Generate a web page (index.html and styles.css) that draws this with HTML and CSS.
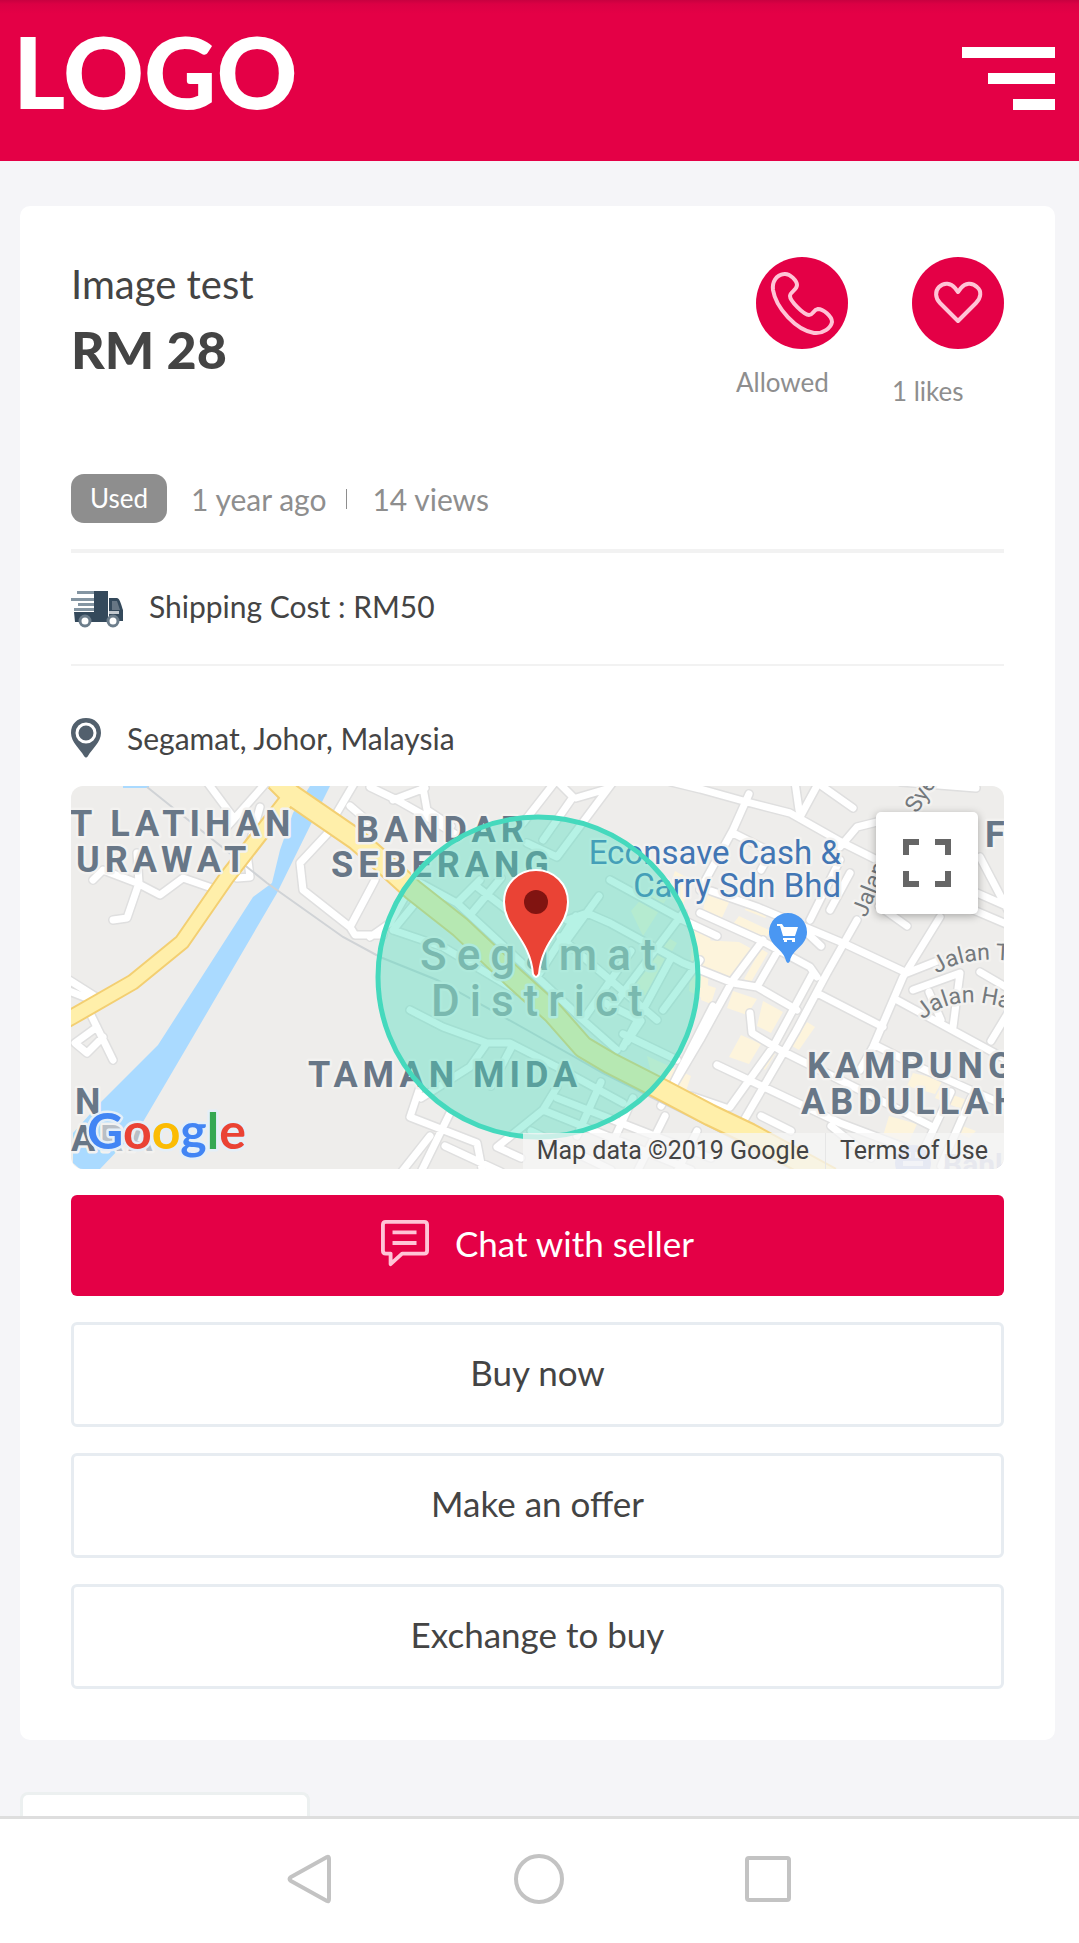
FILE: index.html
```html
<!DOCTYPE html>
<html lang="en">
<head>
  <meta charset="UTF-8">
  <meta name="viewport" content="width=device-width, initial-scale=1.0">
  <title>Image test</title>
  <link rel="stylesheet" href="styles.css">
</head>
<body>

  <header class="header">
    <a class="logo" href="#">LOGO</a>
    <button class="menu-button" type="button" aria-label="Menu">
      <span class="bar"></span>
      <span class="bar bar-medium"></span>
      <span class="bar bar-short"></span>
    </button>
  </header>

  <main class="main">
    <section class="card">
      <div class="card-head">
        <div class="product">
          <h1>Image test</h1>
          <p class="price">RM 28</p>
        </div>
        <div class="actions">
          <div class="action">
            <button class="round" type="button" aria-label="Call seller">
              <svg width="92" height="92" viewBox="0 0 92 92">
                <path d="M28 17C20 18 16 25 17 33C20 51 40 73 58 76C67 77 75 71 76 65C76 59 67 52 62 52C57 53 57 58 53 58C48 58 34 44 34 39C34 35 41 33 41 28C41 24 34 16 28 17Z"/>
              </svg>
            </button>
            <span class="action-label">Allowed</span>
          </div>
          <div class="action likes">
            <button class="round" type="button" aria-label="Like">
              <svg width="92" height="92" viewBox="0 0 92 92">
                <path d="M46 64L28 46C23 41 23 34 27 30C32 25 39 26 43 31L46 35L49 31C53 26 60 25 65 30C70 34 69 41 64 46Z"/>
              </svg>
            </button>
            <span class="action-label">1 likes</span>
          </div>
        </div>
      </div>

      <div class="meta">
        <span class="badge">Used</span>
        <span class="age">1 year ago</span>
        <span class="divider"></span>
        <span>14 views</span>
      </div>

      <div class="shipping">
        <svg width="52" height="38" viewBox="0 0 52 38">
          <path fill="#8495a2" d="M6 1H24V4H6ZM0 8H24V11H0ZM7 13H24V16H7ZM3 18H24V21H3Z"/>
          <path fill="#34495b" d="M23 1H37V32H4L3 22H23Z"/>
          <path fill="#34495b" d="M38 8H46C49 8 51 18 52 20V31H38Z"/>
          <path fill="#fff" d="M41 11H46L49 20H41Z" opacity=".25"/>
          <path fill="#fff" d="M38 21H48V24H38Z" opacity=".7"/>
          <circle cx="14" cy="31" r="5" fill="#fff" stroke="#6c7d8b" stroke-width="3"/>
          <circle cx="42" cy="31" r="5" fill="#fff" stroke="#6c7d8b" stroke-width="3"/>
        </svg>
        <span>Shipping Cost : RM50</span>
      </div>

      <div class="location">
        <svg width="30" height="40" viewBox="0 0 30 40">
          <path fill="#52606d" d="M15 0C6 0 0 6 0 15C0 24 9 31 13 38Q15 41 17 38C21 31 30 24 30 15C30 6 24 0 15 0Z"/>
          <circle cx="15" cy="15" r="9" fill="#52606d" stroke="#fff" stroke-width="3"/>
        </svg>
        <span>Segamat, Johor, Malaysia</span>
      </div>

      <div class="map">
        <svg class="map-canvas" viewBox="0 0 933 383" preserveAspectRatio="xMidYMid slice">
          <!-- land blocks -->
          <g fill="#fdf4dc">
            <path d="M635 105L660 112L650 134L632 126ZM678 113L700 124L694 132L674 124ZM668 130L700 145L694 152L662 138ZM630 154L668 156L681 163L662 192L630 180ZM690 163L697 167L680 196L673 193ZM630 197L645 202L640 218L630 214ZM662 205L686 213L676 229L656 222ZM692 215L712 226L700 247L686 240ZM736 236L744 241L728 264L721 260ZM670 249L690 258L678 278L658 271ZM698 264L704 268L694 284L690 280Z"/>
            <path d="M842 287L872 294L864 308L836 300ZM868 304L896 314L892 324L864 312ZM818 330L846 338L838 356L812 350ZM886 338L905 345L898 352L882 345ZM604 85L622 95L612 118L596 108ZM560 125L590 90L605 98L572 150ZM558 200L594 150L606 157L575 210ZM576 270L620 290L610 320L585 308ZM622 140L640 145L636 215L618 205Z"/>
          </g>
          <path fill="#aadaff" d="M239 0H259L242 34L206 107L116 261L69 341L29 383H9L2 377V347L29 317L87 259L182 111L201 97L209 64L222 27ZM52 0H78V2H52Z"/>

          <!-- minor roads: grey casing under white -->
          <defs>
            <path id="roads" d="M136 -4L162 31M194 -2L156 41M189 21L176 67L179 91L166 92M22 94L32 84L66 97L89 109L112 92L141 102M66 67L68 97L56 132L42 134M257 47L229 77L232 104L279 141L284 149L312 149M304 94L279 141M284 -4L264 30M279 20L299 37M-2 194L25 211M-2 205L16 212M19 227L42 274M26 241L4 257L16 267L32 251
              M299 1L326 14L349 27L389 51M322 14L354 2M351 -4L356 24L380 40M484 -4L452 37M485 -6L502 11L472 54M542 -4L486 71L456 57M505 12L536 3M299 151L319 137L336 107M386 117L409 94M340 92L386 117L466 191L512 234L546 264M322 144L372 161L446 205M350 110L322 144M496 134L516 127L539 137L612 177M539 94L612 134L646 150M612 127L539 224M528 110L496 154M599 174L552 261M629 174L592 224M489 151L586 234M466 191L505 130M512 234L560 165M405 100L470 150M430 92L400 128M552 248L606 274M530 215L570 235L556 256M339 224L372 241L416 257L439 257L486 281L552 317M416 257L399 281L350 312M349 301L339 331L406 357L412 388M379 327L349 388M359 350L329 388M374 360L430 386M440 262L420 300M486 301L472 324L426 361L450 372M486 312L640 372M472 324L620 384M530 296L506 350M562 312L540 360M594 330L566 386M626 345L606 386M460 345L540 384M642 220L599 304L619 314
              M600 -4L629 3L676 16L719 27L772 57L806 74M678 8L662 44L629 104M748 -4L729 31M724 -4L728 24M748 -2L782 22M769 61L786 41L806 36M662 47L700 66L690 84M779 87L759 124M769 74L739 134M629 127L689 154L739 181L746 191M640 105L686 121L772 157L836 187L869 174M786 134L756 187L725 245L672 336M742 187L702 261L659 321M869 131L832 191L802 261L789 284M612 177L662 197L686 201L726 224M692 154L662 194L629 254L590 320M709 161L686 201M733 144L750 160M679 227L681 247L709 264L789 304L860 340M746 207L812 241M826 214L940 276M804 259L850 282L940 322M646 279L769 337L830 360M620 310L655 322M879 114L940 140M890 100L940 122M909 71L940 130M842 204L889 187L882 241M858 206L870 234M909 186L940 204M937 227L920 255M880 306L850 370M900 312L870 380M808 120L836 140M830 -4L905 2M690 330L720 345M760 340L800 372"/>
          </defs>
          <use href="#roads" class="road-casing"/>
          <use href="#roads" class="road"/>
          <path class="rail" d="M76 1L196 97L272 151L309 171L366 194L456 244L532 287L640 341L720 383"/>

          <!-- highways -->
          <g class="highway-casing">
            <path d="M219 10L156 91L111 156L62 196L1 231L-20 243"/>
            <path class="wide" d="M205 -6L219 8L286 54L309 74L342 104L389 141L442 191L482 227L512 261L539 277L586 301L639 329L679 348L760 392"/>
          </g>
          <g class="highway">
            <path d="M219 10L156 91L111 156L62 196L1 231L-20 243"/>
            <path class="wide" d="M205 -6L219 8L286 54L309 74L342 104L389 141L442 191L482 227L512 261L539 277L586 301L639 329L679 348L760 392"/>
          </g>

          <!-- place names -->
          <g class="district">
            <text x="349" y="184">Segamat</text>
            <text x="360" y="230">District</text>
          </g>
          <g class="area">
            <text x="-1" y="50">T LATIHAN</text>
            <text x="5" y="86">URAWAT</text>
            <text x="285" y="56">BANDAR</text>
            <text x="260" y="91">SEBERANG</text>
            <text x="237" y="301">TAMAN MIDA</text>
            <text x="4" y="328">N</text>
            <text x="0" y="365">A<tspan class="faded">RA</tspan></text>
            <text x="914" y="61">F</text>
            <text x="736" y="292">KAMPUNG</text>
            <text x="730" y="328">ABDULLAH</text>
          </g>
          <g class="shop">
            <text x="770" y="78">Econsave Cash &amp;</text>
            <text x="770" y="111">Carry Sdn Bhd</text>
          </g>
          <g class="street">
            <path id="street-a" fill="none" d="M866 188Q896 168 950 176"/>
            <path id="street-b" fill="none" d="M852 234Q888 202 950 228"/>
            <text transform="translate(795 132) rotate(-68)">Jalan</text>
            <text transform="translate(846 28) rotate(-58)">Sye</text>
            <text><textPath href="#street-a">Jalan Ta</textPath></text>
            <text><textPath href="#street-b">Jalan Haji</textPath></text>
          </g>
          <circle cx="842" cy="377" r="18" fill="#b9c2ea"/>
          <path fill="#e7eafa" d="M834 366H840V372H834ZM844 366H850V372H844ZM832 375H852V380H832Z"/>
          <text class="bank" x="872" y="389">Bank</text>

          <!-- shop pin -->
          <path fill="#4a97f2" d="M717 127A19 19 0 0 0 698 146C698 160 713 163 715 175Q717 179 719 175C721 163 736 160 736 146A19 19 0 0 0 717 127Z"/>
          <path fill="#fff" d="M706 138H711L713 141H727L724 150H712L709 140H706ZM712 152H724V154H712ZM713 154H716V156H713ZM721 154H724V156H721Z"/>

          <circle cx="467" cy="191" r="160" fill="#48dfbe" fill-opacity=".4" stroke="#45d9bd" stroke-width="5"/>
          <path fill="#ea4335" stroke="#fff" stroke-width="2" d="M465 84C447 84 433 98 433 116C433 142 459 152 462 188Q465 194 468 188C471 152 497 142 497 116C497 98 483 84 465 84Z"/>
          <circle cx="465" cy="116" r="12" fill="#811411"/>

          <text class="google" x="16" y="363"><tspan fill="#4285f4">G</tspan><tspan fill="#ea4335">o</tspan><tspan fill="#fbbc05">o</tspan><tspan fill="#4285f4">g</tspan><tspan fill="#34a853">l</tspan><tspan fill="#ea4335">e</tspan></text>
        </svg>

        <button class="fullscreen" type="button" aria-label="Toggle fullscreen">
          <svg width="48" height="48" viewBox="0 0 48 48">
            <path d="M3 16V3H16M32 3H45V16M45 32V45H32M16 45H3V32"/>
          </svg>
        </button>
        <div class="attribution">
          <span>Map data ©2019 Google</span>
          <a href="#">Terms of Use</a>
        </div>
      </div>

      <div class="buttons">
        <button class="button primary" type="button">
          <svg width="48" height="48" viewBox="0 0 50 50">
            <path d="M5 3H45Q48 3 48 6V33Q48 36 45 36H22L10 47V36H5Q2 36 2 33V6Q2 3 5 3Z"/>
            <path d="M12 14H37M12 25H37"/>
          </svg>
          Chat with seller
        </button>
        <button class="button" type="button">Buy now</button>
        <button class="button" type="button">Make an offer</button>
        <button class="button" type="button">Exchange to buy</button>
      </div>
    </section>

    <div class="next-card"></div>
  </main>

  <nav class="system-nav">
    <button type="button" aria-label="Back">
      <svg width="50" height="50" viewBox="0 0 50 50"><path d="M42 3Q44 2 44 5V45Q44 48 42 47L6 27Q3 25 6 23Z"/></svg>
    </button>
    <button type="button" aria-label="Home">
      <svg width="50" height="50" viewBox="0 0 50 50"><circle cx="25" cy="25" r="23"/></svg>
    </button>
    <button type="button" aria-label="Recent apps">
      <svg width="50" height="50" viewBox="0 0 50 50"><rect x="4" y="4" width="42" height="42" rx="2"/></svg>
    </button>
  </nav>

</body>
</html>
```
FILE: styles.css
```css
* {
  box-sizing: border-box;
}

body {
  margin: 0;
  min-height: 100vh;
  display: flex;
  flex-direction: column;
  background: #f5f5f8;
  color: #444;
  font-family: Lato, "Open Sans", sans-serif;
  font-size: 30px;
}

button {
  padding: 0;
  border: 0;
  background: none;
  color: inherit;
  font: inherit;
  cursor: pointer;
}

svg {
  display: block;
  flex-shrink: 0;
}

.header {
  height: 161px;
  padding: 18px 24px 0 13px;
  display: flex;
  justify-content: space-between;
  align-items: flex-start;
  background: linear-gradient(#c80040, #db0044 4px, #e40046 14px);
}

.logo {
  color: #fff;
  font-size: 100px;
  font-weight: 900;
  line-height: 104px;
  text-decoration: none;
}

.menu-button {
  margin-top: 29px;
  display: flex;
  flex-direction: column;
  align-items: flex-end;
  gap: 15px;
}

.bar {
  width: 93px;
  height: 11px;
  background: #fff;
}

.bar-medium {
  width: 67px;
}

.bar-short {
  width: 42px;
}

.main {
  flex: 1;
  padding: 45px 24px 0 20px;
  display: flex;
  flex-direction: column;
}

.card {
  padding: 51px;
  border-radius: 10px;
  background: #fff;
}

.card-head {
  display: flex;
  justify-content: space-between;
}

.product h1 {
  margin: 0;
  font-size: 40px;
  font-weight: 400;
  line-height: 54px;
}

.price {
  margin: 0;
  font-size: 52px;
  font-weight: 900;
  line-height: 76px;
}

.actions {
  display: flex;
  gap: 44px;
}

.action {
  width: 112px;
  display: flex;
  flex-direction: column;
  align-items: flex-end;
  gap: 15px;
}

.likes {
  gap: 24px;
}

.round {
  border-radius: 50%;
  background: #e40046;
}

.round path {
  fill: none;
  stroke: #ffc4d6;
  stroke-width: 4;
  stroke-linejoin: round;
}

.action-label {
  align-self: flex-start;
  color: #8e8e8e;
  font-size: 26px;
  line-height: 36px;
}

.meta {
  margin-top: 65px;
  padding-bottom: 26px;
  border-bottom: 4px solid #f2f2f2;
  display: flex;
  align-items: center;
  color: #8e8e8e;
}

.badge {
  padding: 0 19px;
  border-radius: 13px;
  background: #8e8e8e;
  color: #fff;
  font-size: 26px;
  line-height: 49px;
}

.age {
  margin-left: 24px;
}

.divider {
  width: 1px;
  height: 20px;
  margin: 0 25px 0 20px;
  background: #8e8e8e;
}

.shipping {
  padding: 37px 0 36px;
  border-bottom: 2px solid #f2f2f2;
  display: flex;
  gap: 26px;
  line-height: 32px;
}

.location {
  padding: 52px 0 28px;
  display: flex;
  align-items: center;
  gap: 26px;
  line-height: 40px;
}

.map {
  position: relative;
  height: 383px;
  border-radius: 12px;
  overflow: hidden;
  background: #eeedeb;
  font-family: Roboto, sans-serif;
}

.map-canvas {
  width: 100%;
  height: 100%;
}

.road,
.road-casing {
  fill: none;
  stroke: #fff;
  stroke-width: 7;
  stroke-linecap: round;
  stroke-linejoin: round;
}

.road-casing {
  stroke: #dfdfdf;
  stroke-width: 10;
}

.rail {
  fill: none;
  stroke: #d0d3d6;
  stroke-width: 2;
}

.highway,
.highway-casing {
  fill: none;
  stroke: #ffefaa;
  stroke-width: 13;
  stroke-linejoin: round;
}

.highway-casing {
  stroke: #f3cf72;
  stroke-width: 17;
}

.highway .wide {
  stroke-width: 19;
}

.highway-casing .wide {
  stroke-width: 23;
}

.area,
.district,
.shop,
.street,
.google {
  paint-order: stroke;
  stroke: #f3f2f0;
  stroke-width: 5;
  stroke-linejoin: round;
}

.area {
  fill: #687787;
  font-size: 36px;
  font-weight: 700;
  letter-spacing: 5px;
}

.area .faded {
  fill: #b9bfc6;
}

.district {
  fill: #9ba1a6;
  font-size: 44px;
  font-weight: 500;
  letter-spacing: 10px;
}

.shop {
  fill: #4276b4;
  font-size: 33px;
  text-anchor: end;
}

.street {
  fill: #74797d;
  font-size: 23px;
}

.street path {
  stroke: none;
}

.bank {
  fill: #bcc0d8;
  font-size: 30px;
  font-weight: 700;
}

.google {
  font-family: Lato, sans-serif;
  font-size: 50px;
  font-weight: 700;
  stroke: #e4eff8;
}

.fullscreen {
  position: absolute;
  top: 26px;
  right: 26px;
  width: 102px;
  height: 102px;
  display: grid;
  place-items: center;
  border-radius: 5px;
  background: #fff;
  box-shadow: 0 2px 8px rgba(0, 0, 0, .3);
}

.fullscreen path {
  fill: none;
  stroke: #666;
  stroke-width: 6;
}

.attribution {
  position: absolute;
  right: 0;
  bottom: 0;
  display: flex;
  background: rgba(245, 245, 245, .75);
  color: #444;
  font-size: 25px;
  line-height: 36px;
}

.attribution span,
.attribution a {
  padding: 0 16px 0 14px;
  color: inherit;
  text-decoration: none;
}

.attribution a {
  border-left: 1px solid #e6e6e6;
}

.buttons {
  margin-top: 26px;
  display: flex;
  flex-direction: column;
  gap: 26px;
}

.button {
  height: 105px;
  padding-bottom: 5px;
  display: flex;
  justify-content: center;
  align-items: center;
  gap: 26px;
  border: 3px solid #e7ecf1;
  border-radius: 6px;
  background: #fff;
  font-size: 35px;
}

.primary {
  height: 101px;
  border: 0;
  background: #e40046;
  color: #fff;
}

.primary path {
  fill: none;
  stroke: #ffc4d6;
  stroke-width: 4;
  stroke-linejoin: round;
}

.next-card {
  flex: 1;
  width: 28%;
  min-height: 20px;
  margin-top: 52px;
  border: 3px solid #ecf0f0;
  border-bottom: 0;
  border-radius: 8px 8px 0 0;
  background: #fff;
}

.system-nav {
  height: 127px;
  padding: 0 2px 5px 0;
  display: flex;
  justify-content: center;
  align-items: center;
  gap: 179px;
  border-top: 3px solid #dedede;
  background: #fff;
}

.system-nav svg {
  fill: none;
  stroke: #c3c3c3;
  stroke-width: 4;
  stroke-linejoin: round;
}
```
